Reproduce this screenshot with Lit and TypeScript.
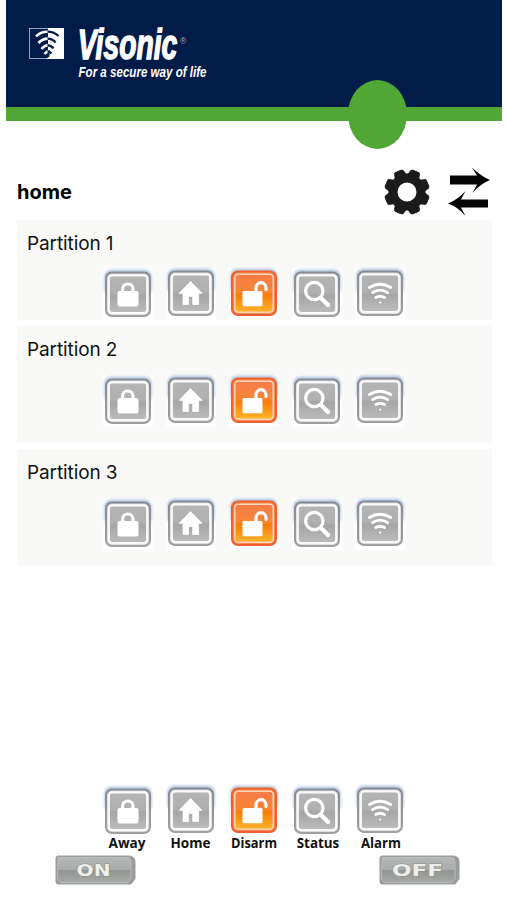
import { LitElement, html, svg, css } from "lit";
import { customElement, property } from "lit/decorators.js";

const KINDS = ["away", "home", "disarm", "status", "alarm"];
const LABELS: Record<string, [string, number, number]> = {
  away: ["Away", 24, 37],
  home: ["Home", 24.5, 40],
  disarm: ["Disarm", 25, 46],
  status: ["Status", 26, 42.5],
  alarm: ["Alarm", 26, 40],
};

const glyph = (kind: string) => {
  switch (kind) {
    case "away":
      return svg`<rect x="14.5" y="23" width="21" height="15.5" rx="2" fill="#fff"/>
        <path d="M19.6 24V21a5.2 5 0 0 1 10.4 0V24" fill="none" stroke="#fff" stroke-width="3.2"/>`;
    case "home":
      return svg`<path d="M24.5 13.5L36 25.3H32.6V36.5H26.7V28.5H22.6V36.5H17V25.3H13.2Z" fill="#fff" stroke="#fff" stroke-width=".8" stroke-linejoin="round"/>`;
    case "disarm":
      return svg`<rect x="13.5" y="23" width="20" height="15.3" rx="1.5" fill="#fff"/>
        <path d="M27 24V20a5 5.3 0 0 1 10 0V21.5" fill="none" stroke="#fff" stroke-width="3.2" stroke-linecap="round"/>`;
    case "status":
      return svg`<circle cx="22.3" cy="23" r="8.7" fill="none" stroke="#fff" stroke-width="3.2"/>
        <path d="M29 30L36 37" stroke="#fff" stroke-width="4.2" stroke-linecap="round"/>`;
    default:
      return svg`<g fill="none" stroke="#fff" stroke-width="2.9" stroke-linecap="round">
        <path d="M14.5 19.4Q25 13 35.7 19.4"/>
        <path d="M17.6 24.6Q25 19.6 32.7 24.6"/>
        <path d="M20.8 29.6Q25 27 29.6 29.6"/></g><circle cx="25.2" cy="34.6" r="1.1" fill="#fff"/>`;
  }
};

@customElement("state-button")
class StateButton extends LitElement {
  static styles = css`
    :host { display: block; width: 50px; }
    svg { display: block; overflow: visible; }
    .label { font: 700 14px "Open Sans", "Noto Sans", sans-serif; fill: #111; text-anchor: middle; }
  `;
  @property() kind = "away";
  @property({ type: Boolean }) labelled = false;

  render() {
    const hot = this.kind === "disarm";
    const [text, mid, width] = LABELS[this.kind];
    const dy = this.kind === "away" || this.kind === "status" ? 1 : 0;
    return html`<svg width="50" height="52" viewBox="0 0 50 52">
      <defs>
        <linearGradient id="edge" x2="0" y2="1">
          <stop offset="0" stop-color=${hot ? "#ee602b" : "#888b92"}/>
          <stop offset="1" stop-color=${hot ? "#ed602f" : "#a0a0a0"}/>
        </linearGradient>
        <linearGradient id="face" x2="0" y2="1">
          <stop offset="0" stop-color=${hot ? "#f77b48" : "#b5b5b5"}/>
          <stop offset=".46" stop-color=${hot ? "#f68735" : "#b0b0b0"}/>
          <stop offset=".54" stop-color=${hot ? "#f77b0b" : "#a6a6a6"}/>
          <stop offset="1" stop-color=${hot ? "#ffb52b" : "#bcbcbc"}/>
        </linearGradient>
        <filter id="soft" x="-20%" y="-20%" width="140%" height="140%"><feGaussianBlur stdDeviation="1"/></filter>
      </defs>
      <rect width="50" height="52" fill="#fff" opacity=".8"/>
      <rect x="1.2" y=${0.4 + dy} width="47.6" height="26" rx="7" fill="#b9cae2" filter="url(#soft)"/>
      <rect x="3" y=${3.5 + dy} width="44" height="43.5" rx="6" fill=${hot ? "#f98a52" : "#d6d6d6"} stroke="url(#edge)" stroke-width="2"/>
      <rect x="5.8" y=${6.3 + dy} width="38.4" height="37.9" rx="3.5" fill="url(#face)" stroke=${hot ? "#ffd3b8" : "#fafafa"} stroke-width=${hot ? 1.5 : 2.2}/>
      ${glyph(this.kind)}
      ${this.labelled
        ? svg`<text class="label" x=${mid} y="63" textLength=${width} lengthAdjust="spacingAndGlyphs">${text}</text>`
        : ""}
    </svg>`;
  }
}

@customElement("state-row")
class StateRow extends LitElement {
  static styles = css`
    :host { display: flex; gap: 13px; }
  `;
  @property({ type: Boolean }) labelled = false;
  render() {
    return KINDS.map((k) => html`<state-button .kind=${k} .labelled=${this.labelled}></state-button>`);
  }
}

@customElement("app-root")
class AppRoot extends LitElement {
  static styles = css`
    :host { display: flex; flex-direction: column; height: 900px; background: #fff; color: #111; font-family: Inter, "Liberation Sans", sans-serif; overflow: hidden; }
    svg { display: block; }
    .banner { position: relative; margin: 0 5px 0 6px; height: 107px; box-sizing: border-box; background: #021c49; flex: none; }
    .stripe { margin: 0 5px 0 6px; height: 14px; background: #51a735; flex: none; }
    .knob { position: absolute; left: 342px; top: 80px; width: 59px; height: 69px; border-radius: 50%; background: #51a735; }
    .brand { font: italic 700 42px "Liberation Sans", sans-serif; }
    .slogan { font: italic 700 14px "Liberation Sans", sans-serif; }
    .title { display: flex; align-items: center; height: 57px; padding: 42px 17px 0; box-sizing: content-box; flex: none; }
    .name { flex: 1; font-size: 20px; font-weight: 700; color: #000; }
    .gear { margin-right: 18px; }
    .cards { display: flex; flex-direction: column; gap: 6px; margin: 0 15px 0 17px; }
    .card { box-sizing: border-box; height: 117px; padding: 11px 0 0 10px; background: #f9f9f7; overflow: hidden; }
    .first { height: 100px; }
    .heading { font-size: 19px; line-height: 25px; letter-spacing: -0.1px; }
    .row { margin: 13px 0 0 76px; }
    .first .row { margin-top: 12px; }
    .legend { margin: 219px 0 0 103px; }
    .switches { display: flex; justify-content: space-between; margin: 18px 47px 0 55px; }
    .cap { font: 700 16px "DejaVu Sans", sans-serif; fill: #eceeec; text-anchor: middle; stroke: #8b8f8c; stroke-width: 1px; paint-order: stroke; }
  `;

  gear() {
    const teeth = [22.5, 67.5, 112.5, 157.5, 202.5, 247.5, 292.5, 337.5];
    return html`<svg class="gear" width="46" height="46" viewBox="-23 -23 46 46">
      <circle r="14" fill="none" stroke="#1b1b1b" stroke-width="9"/>
      ${teeth.map((a) => svg`<path transform="rotate(${a})" d="M-6.2 -15L-4.7 -21Q-4.4 -22.1 -3 -22.3H3Q4.4 -22.1 4.7 -21L6.2 -15Z" fill="#1b1b1b" stroke="#1b1b1b" stroke-linejoin="round"/>`)}
    </svg>`;
  }

  toggle(text: string, width: number) {
    return html`<svg width="81" height="31" viewBox="0 0 81 31">
      <defs><linearGradient id="metal" x2="0" y2="1">
        <stop offset="0" stop-color="#b4b7b5"/><stop offset=".48" stop-color="#a9aca9"/>
        <stop offset=".52" stop-color="#929693"/><stop offset="1" stop-color="#a6a9a6"/>
      </linearGradient></defs>
      <path d="M3 1H74Q80 1 80 7V24L76 29H3Q1 29 1 27V3Q1 1 3 1Z" fill="#999c9a" stroke="#9c9f9d"/>
      <path d="M3 2.5H73Q76 3 76 7V24L73 27.5H5L2.5 24Z" fill="url(#metal)" stroke="#bec1be" stroke-width=".8"/>
      <text class="cap" x="38.5" y="20.5" textLength=${width} lengthAdjust="spacingAndGlyphs">${text}</text>
    </svg>`;
  }

  render() {
    return html`
      <div class="banner">
        <svg width="496" height="107" viewBox="6 0 496 107">
          <rect x="29.5" y="28.5" width="34" height="30" fill="none" stroke="#b9c5dc" stroke-width=".8"/>
          <path d="M46 28H64V59H46L49.5 56.5V50H48V28Z" fill="#fff"/>
          <g fill="none" stroke="#fff" stroke-width="2.6">
            <path d="M36 36.4Q41 31.4 48 31.8M38.4 43Q42.5 38.6 48 38.6M41.5 49Q44.5 45.2 48 45.2M44.5 54Q46.5 51.4 49 51.4"/>
          </g>
          <g fill="none" stroke="#021c49" stroke-width="2.4">
            <path d="M47.5 31.6Q54 31.6 58.5 36M47.5 38.6Q52.8 38.8 55.6 42.4M47.5 45.2Q51.5 45.6 53.4 48.4M47.5 51.4Q50 51.6 51.4 53.6"/>
          </g>
          <text class="brand" x="77.8" y="59" fill="#fff" stroke="#fff" stroke-width="1.5" textLength="99.5" lengthAdjust="spacingAndGlyphs">Visonic</text>
          <text x="180" y="43.5" font-family="Liberation Sans" font-size="9" fill="#9aa6bd" textLength="6.5" lengthAdjust="spacingAndGlyphs">®</text>
          <text class="slogan" x="78.5" y="77" fill="#fff" textLength="128" lengthAdjust="spacingAndGlyphs">For a secure way of life</text>
        </svg>
        <div class="knob"></div>
      </div>
      <div class="stripe"></div>
      <div class="title">
        <span class="name">home</span>
        ${this.gear()}
        <svg width="42" height="50" viewBox="448 167 42 50">
          <path d="M450 175.5H477L472 167.5Q480 175.5 490 180Q480 184 472.5 193L477 184.5H450ZM488 199.5H461L465.5 191Q458 199.5 448 203.5Q458 207 465.5 216L461 207.5H488Z" fill="#050505"/>
        </svg>
      </div>
      <div class="cards">
        ${[1, 2, 3].map((n) => html`<section class="card ${n === 1 ? "first" : ""}">
          <div class="heading">Partition ${n}</div>
          <state-row class="row"></state-row>
        </section>`)}
      </div>
      <state-row class="legend" .labelled=${true}></state-row>
      <div class="switches">${this.toggle("ON", 34)}${this.toggle("OFF", 51)}</div>
    `;
  }
}
